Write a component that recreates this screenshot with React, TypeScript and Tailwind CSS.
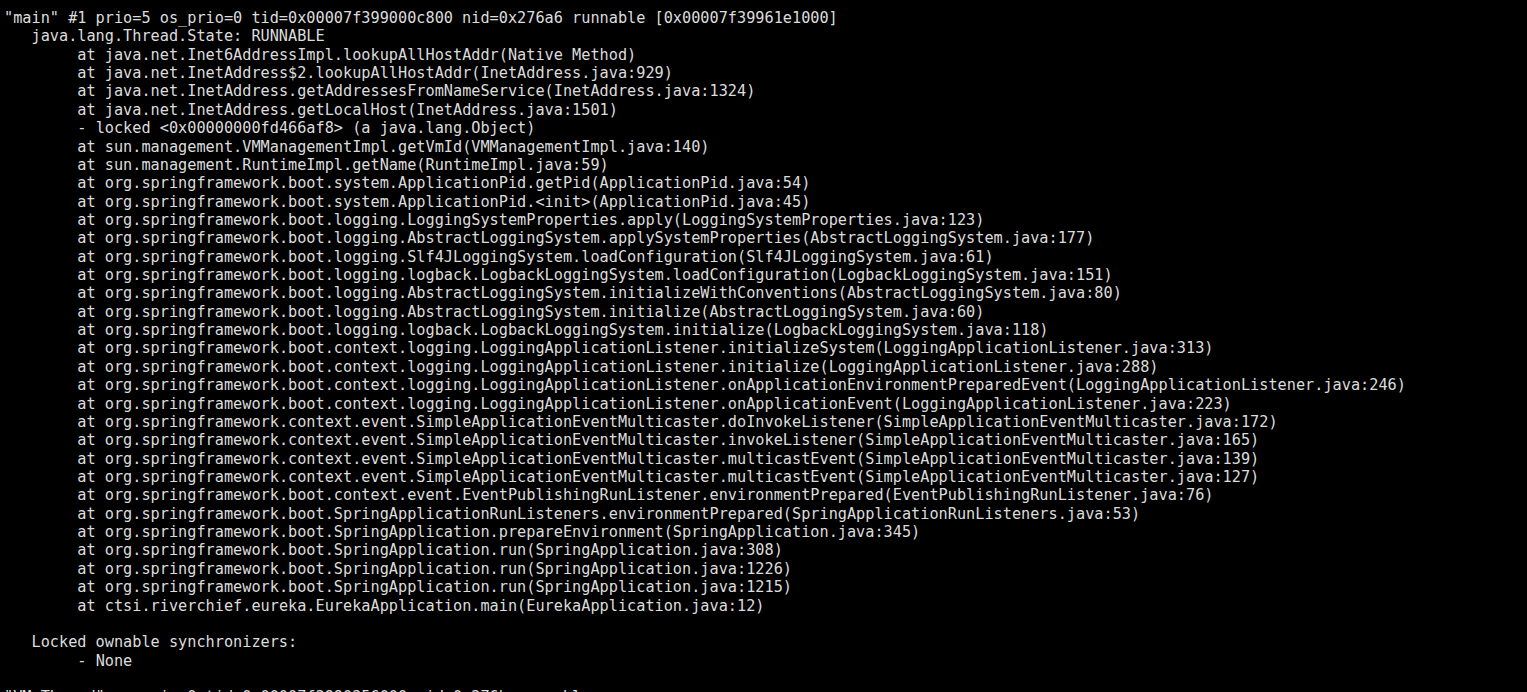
const LINES: string[] = [
  '"main" #1 prio=5 os_prio=0 tid=0x00007f399000c800 nid=0x276a6 runnable [0x00007f39961e1000]',
  "   java.lang.Thread.State: RUNNABLE",
  "\tat java.net.Inet6AddressImpl.lookupAllHostAddr(Native Method)",
  "\tat java.net.InetAddress$2.lookupAllHostAddr(InetAddress.java:929)",
  "\tat java.net.InetAddress.getAddressesFromNameService(InetAddress.java:1324)",
  "\tat java.net.InetAddress.getLocalHost(InetAddress.java:1501)",
  "\t- locked <0x00000000fd466af8> (a java.lang.Object)",
  "\tat sun.management.VMManagementImpl.getVmId(VMManagementImpl.java:140)",
  "\tat sun.management.RuntimeImpl.getName(RuntimeImpl.java:59)",
  "\tat org.springframework.boot.system.ApplicationPid.getPid(ApplicationPid.java:54)",
  "\tat org.springframework.boot.system.ApplicationPid.<init>(ApplicationPid.java:45)",
  "\tat org.springframework.boot.logging.LoggingSystemProperties.apply(LoggingSystemProperties.java:123)",
  "\tat org.springframework.boot.logging.AbstractLoggingSystem.applySystemProperties(AbstractLoggingSystem.java:177)",
  "\tat org.springframework.boot.logging.Slf4JLoggingSystem.loadConfiguration(Slf4JLoggingSystem.java:61)",
  "\tat org.springframework.boot.logging.logback.LogbackLoggingSystem.loadConfiguration(LogbackLoggingSystem.java:151)",
  "\tat org.springframework.boot.logging.AbstractLoggingSystem.initializeWithConventions(AbstractLoggingSystem.java:80)",
  "\tat org.springframework.boot.logging.AbstractLoggingSystem.initialize(AbstractLoggingSystem.java:60)",
  "\tat org.springframework.boot.logging.logback.LogbackLoggingSystem.initialize(LogbackLoggingSystem.java:118)",
  "\tat org.springframework.boot.context.logging.LoggingApplicationListener.initializeSystem(LoggingApplicationListener.java:313)",
  "\tat org.springframework.boot.context.logging.LoggingApplicationListener.initialize(LoggingApplicationListener.java:288)",
  "\tat org.springframework.boot.context.logging.LoggingApplicationListener.onApplicationEnvironmentPreparedEvent(LoggingApplicationListener.java:246)",
  "\tat org.springframework.boot.context.logging.LoggingApplicationListener.onApplicationEvent(LoggingApplicationListener.java:223)",
  "\tat org.springframework.context.event.SimpleApplicationEventMulticaster.doInvokeListener(SimpleApplicationEventMulticaster.java:172)",
  "\tat org.springframework.context.event.SimpleApplicationEventMulticaster.invokeListener(SimpleApplicationEventMulticaster.java:165)",
  "\tat org.springframework.context.event.SimpleApplicationEventMulticaster.multicastEvent(SimpleApplicationEventMulticaster.java:139)",
  "\tat org.springframework.context.event.SimpleApplicationEventMulticaster.multicastEvent(SimpleApplicationEventMulticaster.java:127)",
  "\tat org.springframework.boot.context.event.EventPublishingRunListener.environmentPrepared(EventPublishingRunListener.java:76)",
  "\tat org.springframework.boot.SpringApplicationRunListeners.environmentPrepared(SpringApplicationRunListeners.java:53)",
  "\tat org.springframework.boot.SpringApplication.prepareEnvironment(SpringApplication.java:345)",
  "\tat org.springframework.boot.SpringApplication.run(SpringApplication.java:308)",
  "\tat org.springframework.boot.SpringApplication.run(SpringApplication.java:1226)",
  "\tat org.springframework.boot.SpringApplication.run(SpringApplication.java:1215)",
  "\tat ctsi.riverchief.eureka.EurekaApplication.main(EurekaApplication.java:12)",
  "",
  "   Locked ownable synchronizers:",
  "\t- None",
  "",
  '"VM Thread" os_prio=0 tid=0x00007f3990256000 nid=0x276b runnable',
];

export default function App() {
  return (
    <div className="h-[692px] w-full overflow-hidden bg-black pl-1 pt-[9px]">
      <pre
        className="text-[15.22px] leading-[18.36px] text-[#dcdcdc] [tab-size:8]"
        style={{ fontFamily: '"DejaVu Sans Mono", monospace' }}
      >
        {LINES.map((l, i) => (
          <div key={i} className="h-[18.36px] whitespace-pre">
            {l}
          </div>
        ))}
      </pre>
    </div>
  );
}
